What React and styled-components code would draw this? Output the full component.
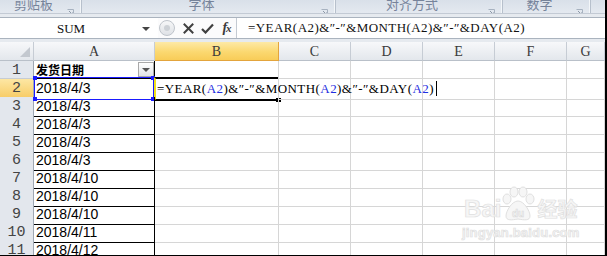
import React from 'react';
import styled, { createGlobalStyle } from 'styled-components';

const COLS = '34px 121px 124px 72px 72px 72px 72px 38px';

const Global = createGlobalStyle`
  html, body { margin: 0; padding: 0; background: #fff; }
  body { width: 607px; height: 256px; overflow: hidden; }
`;

const Frame = styled.div`
  position: relative;
  width: 607px;
  height: 256px;
  box-sizing: border-box;
  border-right: 2px solid #000;
  border-bottom: 1px solid #000;
  overflow: hidden;
  background: #fff;
  font-family: "Liberation Sans", sans-serif;
`;

/* ---------- ribbon strip ---------- */
const Ribbon = styled.div`
  display: flex;
  height: 13px;
  border-bottom: 1px solid #c3cad4;
  background: linear-gradient(#d9e0e9, #e4e9f0);
  overflow: hidden;
`;

const Group = styled.div`
  flex: ${p => (p.$w ? `0 0 ${p.$w}px` : '1 1 auto')};
  box-sizing: border-box;
  display: grid;
  grid-template-columns: 1fr 14px;
  align-items: start;
  border-right: ${p => (p.$w ? '1px solid #b7c0cc' : 'none')};
  box-shadow: ${p => (p.$w ? 'inset -1px 0 0 #f3f6f9' : 'none')};
`;

const GroupLabel = styled.span`
  justify-self: center;
  font-family: "Noto Sans CJK SC", sans-serif;
  font-size: 13px;
  line-height: 13px;
  margin-top: -3px;
  color: #76839a;
  white-space: nowrap;
`;

const LauncherBox = styled.span`
  display: block;
  width: 7px;
  height: 7px;
  margin-top: 2px;
`;

const Launcher = () => (
  <LauncherBox>
    <svg width="7" height="7" viewBox="0 0 7 7">
      <path d="M0.5 0.5H6.5V6.5" fill="none" stroke="#a7b2c0" strokeWidth="1" />
      <path d="M2 2L5.5 5.5M3.5 5.5H5.5V3.5" fill="none" stroke="#8b97a6" strokeWidth="1" />
    </svg>
  </LauncherBox>
);

const Gap = styled.div`
  height: 3px;
  background: #e6eaef;
`;

/* ---------- formula bar ---------- */
const FormulaBar = styled.div`
  display: flex;
  height: 20px;
  border-top: 1px solid #aab3be;
  border-bottom: 1px solid #aab3be;
  background: #fff;
`;

const NameBox = styled.div`
  flex: 0 0 158px;
  display: flex;
  align-items: center;
`;

const NameText = styled.span`
  flex: 0 0 142px;
  text-align: center;
  font-family: "Liberation Serif", serif;
  font-size: 13px;
  padding-top: 2px;
  color: #111;
`;

const DropArrow = styled.span`
  width: 0;
  height: 0;
  border-left: 4px solid transparent;
  border-right: 4px solid transparent;
  border-top: 4px solid #444;
  margin-top: 1px;
`;

const ButtonArea = styled.div`
  flex: 0 0 78px;
  display: flex;
  align-items: center;
  border-right: 1px solid #c4cad2;
  background: #fbfbfc;
`;

const Grip = styled.span`
  flex: 0 0 auto;
  width: 16px;
  height: 16px;
  margin-left: 1px;
  box-sizing: border-box;
  border-radius: 50%;
  border: 1px solid #bfc4cb;
  background: linear-gradient(#f6f7f8, #dfe2e6);
  display: flex;
  align-items: center;
  justify-content: center;
  &::after {
    content: '';
    width: 6px;
    height: 6px;
    border-radius: 50%;
    background: #cdd1d6;
  }
`;

const IconBtn = styled.span`
  flex: 0 0 19px;
  display: flex;
  align-items: center;
  justify-content: center;
  margin-left: ${p => p.$ml || 0}px;
`;

const Fx = styled.span`
  font-family: "Liberation Serif", serif;
  font-style: italic;
  font-weight: bold;
  font-size: 14px;
  color: #3a3a3a;
  letter-spacing: -1px;
  & > small { font-size: 11px; }
`;

const FormulaText = styled.div`
  flex: 1;
  padding-left: 11px;
  padding-top: 1px;
  font-family: "Liberation Serif", serif;
  font-size: 13px;
  letter-spacing: 0.43px;
  line-height: 18px;
  color: #111;
  white-space: pre;
`;

/* ---------- sheet ---------- */
const Sheet = styled.div`
  display: flex;
  flex-direction: column;
`;

const Row = styled.div`
  display: grid;
  grid-template-columns: ${COLS};
  height: ${p => (p.$head ? 19 : 18)}px;
`;

const ColHead = styled.div`
  box-sizing: border-box;
  border-right: 1px solid ${p => (p.$sel ? '#e3a43c' : '#c6ccd4')};
  border-bottom: 1px solid ${p => (p.$sel ? '#e3a43c' : '#b9c0c9')};
  background: ${p => (p.$sel
    ? 'linear-gradient(#fde9a6, #fbd870 55%, #f8cc58)'
    : 'linear-gradient(#f7f8fa, #e3e7ec)')};
  font-family: "Liberation Serif", serif;
  font-size: 14px;
  line-height: 19px;
  color: #3a3a3a;
  text-align: center;
  overflow: hidden;
`;

const Corner = styled(ColHead)`
  display: flex;
  align-items: flex-end;
  justify-content: flex-end;
  padding: 0 3px 3px 0;
  &::after {
    content: '';
    width: 0;
    height: 0;
    border-left: 10px solid transparent;
    border-bottom: 10px solid #c3c8cf;
  }
`;

const RowHead = styled.div`
  box-sizing: border-box;
  border-right: 1px solid #9ea7b3;
  border-bottom: 1px solid ${p => (p.$sel ? '#eeb04b' : '#c6ccd4')};
  background: ${p => (p.$sel
    ? 'linear-gradient(#fde7a4, #f7ca62)'
    : '#e3e7ed')};
  font-family: "Liberation Mono", monospace;
  font-size: 15px;
  line-height: 20px;
  color: #444;
  text-align: center;
  overflow: hidden;
`;

const Cell = styled.div`
  position: relative;
  box-sizing: border-box;
  border-right: 1px solid ${p => (p.$table ? '#000' : '#d6d6d6')};
  border-bottom: 1px solid ${p => (p.$table ? '#000' : '#d6d6d6')};
  padding-left: 2px;
  font-family: "Liberation Sans", sans-serif;
  font-size: 14px;
  line-height: 19px;
  color: #000;
  white-space: nowrap;
  display: flex;
  align-items: flex-start;
  justify-content: space-between;
`;

const HeaderText = styled.span`
  font-family: "Noto Sans CJK SC", sans-serif;
  font-weight: bold;
  font-size: 12px;
  line-height: 17px;
`;

const FilterBtn = styled.span`
  flex: 0 0 auto;
  width: 16px;
  height: 15px;
  margin-top: 1px;
  box-sizing: border-box;
  border: 1px solid #a9a9a9;
  background: linear-gradient(#ffffff, #e2e4e7);
  display: flex;
  align-items: center;
  justify-content: center;
  &::after {
    content: '';
    width: 0;
    height: 0;
    border-left: 4px solid transparent;
    border-right: 4px solid transparent;
    border-top: 4px solid #555;
  }
`;

const CellFormula = styled.span`
  font-family: "Liberation Serif", serif;
  font-size: 13px;
  letter-spacing: 0.43px;
  line-height: 20px;
  color: #000;
  position: relative;
  z-index: 2;
`;

const Ref = styled.span`
  color: #1f2fe0;
`;

const Caret = styled.span`
  display: inline-block;
  width: 1px;
  height: 15px;
  background: #000;
  margin-left: 2px;
  vertical-align: -3px;
`;

const ActiveFrame = styled.div`
  position: absolute;
  top: -2px;
  left: -1px;
  right: 0;
  bottom: -2px;
  border-top: 2px solid #000;
  border-bottom: 2px solid #000;
  border-left: 2px solid #f0e01a;
  pointer-events: none;
  &::after {
    content: '';
    position: absolute;
    right: -3px;
    bottom: -3px;
    width: 5px;
    height: 4px;
    background: #000;
  }
`;

const RangeFrame = styled.div`
  position: absolute;
  top: -2px;
  left: 0;
  right: 0;
  bottom: -1px;
  border: 1px solid #1a1aff;
  pointer-events: none;
`;

const Handle = styled.span`
  position: absolute;
  width: 4px;
  height: 4px;
  background: #1a1aff;
  ${p => (p.$t ? 'top: -2px;' : 'bottom: -2px;')}
  ${p => (p.$l ? 'left: -2px;' : 'right: -2px;')}
`;

/* ---------- watermark ---------- */
const Watermark = styled.div`
  position: absolute;
  left: 462px;
  top: 186px;
  display: flex;
  flex-direction: column;
  align-items: center;
  pointer-events: none;
  color: #f6f6f6;
  -webkit-text-stroke: 0.7px #e0e0e0;
  font-family: "Liberation Sans", sans-serif;
`;

const WmTop = styled.div`
  display: flex;
  align-items: flex-end;
  font-size: 24px;
  font-weight: bold;
  line-height: 26px;
`;

const WmCn = styled.span`
  font-family: "Noto Sans CJK SC", sans-serif;
  font-size: 20px;
  margin-left: 2px;
`;

const WmUrl = styled.div`
  font-size: 13px;
  font-weight: bold;
  line-height: 15px;
  margin-top: 3px;
  letter-spacing: 0.2px;
`;

const Paw = () => (
  <svg width="34" height="36" viewBox="0 0 34 36">
    <g fill="#f6f6f6" stroke="#e0e0e0" strokeWidth="1">
      <ellipse cx="6" cy="13" rx="4" ry="5" />
      <ellipse cx="13" cy="6" rx="4" ry="5" />
      <ellipse cx="22" cy="6" rx="4" ry="5" />
      <ellipse cx="29" cy="13" rx="4" ry="5" />
      <path d="M17 15C11 15 5 25 5 30C5 35 11 34 17 33C23 34 29 35 29 30C29 25 23 15 17 15Z" />
    </g>
    <text x="17" y="31" textAnchor="middle" fontSize="10" fontWeight="bold" fill="#f6f6f6" stroke="#dadada" strokeWidth="0.6" fontFamily="Liberation Sans, sans-serif">du</text>
  </svg>
);

/* ---------- data ---------- */
const colLetters = ['A', 'B', 'C', 'D', 'E', 'F', 'G'];
const dates = [
  '2018/4/3', '2018/4/3', '2018/4/3', '2018/4/3', '2018/4/3',
  '2018/4/10', '2018/4/10', '2018/4/10', '2018/4/11', '2018/4/12',
];

const Q = '\u2033';

const FormulaInCell = () => (
  <CellFormula>
    =YEAR(<Ref>A2</Ref>)&amp;{Q}-{Q}&amp;MONTH(<Ref>A2</Ref>)&amp;{Q}-{Q}&amp;DAY(<Ref>A2</Ref>)
    <Caret />
  </CellFormula>
);

const EmptyCells = ({ count }) =>
  Array.from({ length: count }, (_, i) => <Cell key={i} />);

export default function App() {
  return (
    <>
      <Global />
      <Frame>
        <Ribbon>
          <Group $w={82}><GroupLabel>剪贴板</GroupLabel><Launcher /></Group>
          <Group $w={254}><GroupLabel>字体</GroupLabel><Launcher /></Group>
          <Group $w={167}><GroupLabel>对齐方式</GroupLabel><Launcher /></Group>
          <Group $w={88}><GroupLabel>数字</GroupLabel><Launcher /></Group>
          <Group />
        </Ribbon>
        <Gap />
        <FormulaBar>
          <NameBox>
            <NameText>SUM</NameText>
            <DropArrow />
          </NameBox>
          <ButtonArea>
            <Grip />
            <IconBtn $ml={4}>
              <svg width="11" height="11" viewBox="0 0 11 11">
                <path d="M1.5 1.5L9.5 9.5M9.5 1.5L1.5 9.5" stroke="#404040" strokeWidth="2" strokeLinecap="square" />
              </svg>
            </IconBtn>
            <IconBtn>
              <svg width="13" height="11" viewBox="0 0 13 11">
                <path d="M1 6L4.5 9.5L12 1.5" fill="none" stroke="#404040" strokeWidth="2.2" />
              </svg>
            </IconBtn>
            <IconBtn>
              <Fx>f<small>x</small></Fx>
            </IconBtn>
          </ButtonArea>
          <FormulaText>=YEAR(A2)&amp;{Q}-{Q}&amp;MONTH(A2)&amp;{Q}-{Q}&amp;DAY(A2)</FormulaText>
        </FormulaBar>
        <Gap />
        <Sheet>
          <Row $head>
            <Corner />
            {colLetters.map(c => (
              <ColHead key={c} $sel={c === 'B'}>{c}</ColHead>
            ))}
          </Row>
          <Row>
            <RowHead>1</RowHead>
            <Cell $table>
              <HeaderText>发货日期</HeaderText>
              <FilterBtn />
            </Cell>
            <EmptyCells count={6} />
          </Row>
          {dates.map((d, i) => {
            const n = i + 2;
            const active = n === 2;
            return (
              <Row key={n}>
                <RowHead $sel={active}>{n}</RowHead>
                <Cell $table>
                  {d}
                  {active && (
                    <RangeFrame>
                      <Handle $t $l />
                      <Handle $t />
                      <Handle $l />
                      <Handle />
                    </RangeFrame>
                  )}
                </Cell>
                {active ? (
                  <>
                    <Cell>
                      <FormulaInCell />
                      <ActiveFrame />
                    </Cell>
                    <EmptyCells count={5} />
                  </>
                ) : (
                  <EmptyCells count={6} />
                )}
              </Row>
            );
          })}
        </Sheet>
        <Watermark>
          <WmTop>
            <span>Bai</span>
            <Paw />
            <WmCn>经验</WmCn>
          </WmTop>
          <WmUrl>jingyan.baidu.com</WmUrl>
        </Watermark>
      </Frame>
    </>
  );
}
